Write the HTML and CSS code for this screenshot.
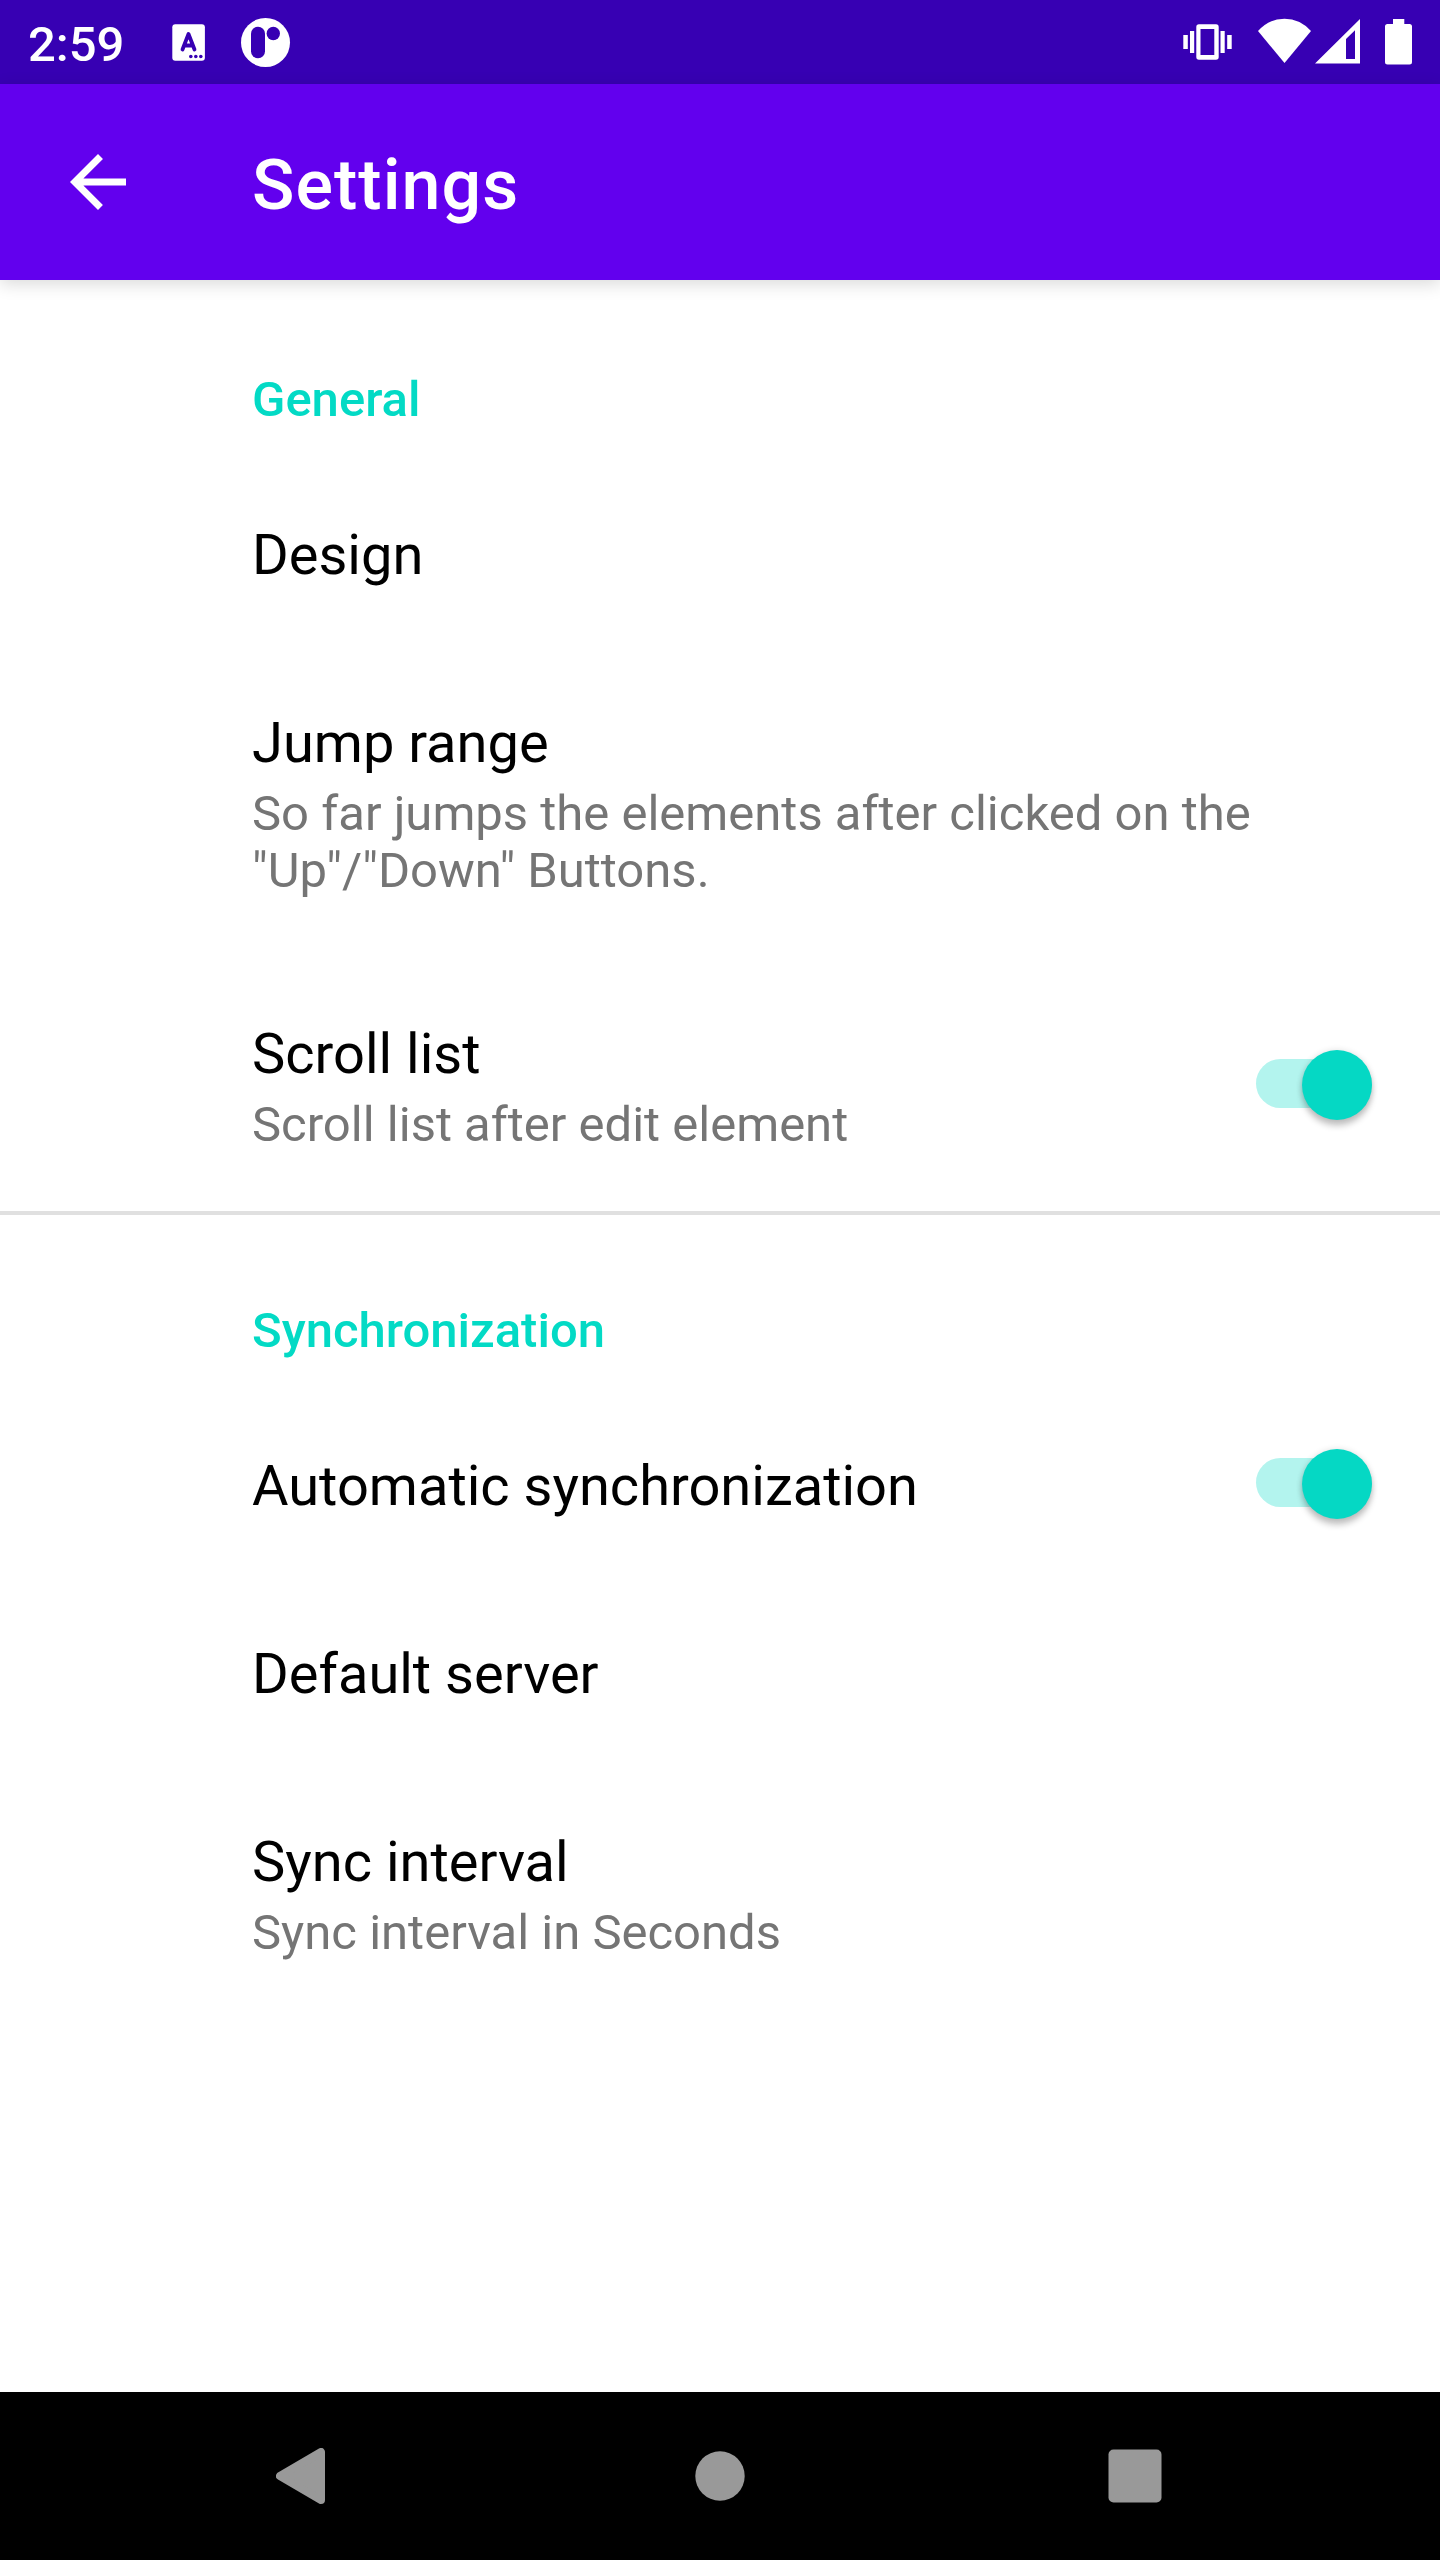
FILE: index.html
```html
<!DOCTYPE html>
<html lang="en">
<head>
<meta charset="utf-8">
<title>Settings</title>
<link rel="stylesheet" href="styles.css">
</head>
<body>
<div class="screen">
  <div class="status-bar">
    <span class="clock">2:59</span>
    <svg class="icon-keyboard" width="34" height="38" viewBox="0 0 34 38"><rect x="0.3" y="0.3" width="32.6" height="36.4" rx="3" fill="#fff"/><path d="M10.500 25.500L16.500 10L22.500 25.500M12.500 21.500H20.500" fill="none" stroke="#3700b3" stroke-width="3.800" stroke-linecap="round" stroke-linejoin="round"/><g fill="#3700b3"><circle cx="18.800" cy="32.500" r="1.800"/><circle cx="23.800" cy="32.500" r="1.800"/><circle cx="28.800" cy="32.500" r="1.800"/></g></svg>
    <svg class="icon-app" width="50" height="50" viewBox="0 0 50 50"><circle cx="24.500" cy="24.500" r="24.500" fill="#fff"/><rect x="10" y="8.700" width="14" height="31.500" rx="7" fill="#3700b3"/><circle cx="32.300" cy="15.500" r="6.700" fill="#3700b3"/></svg>
    <div class="status-right">
      <svg class="icon-vibrate" width="50" height="36" viewBox="0 0 50 36"><g fill="#fff"><rect x="0.300" y="11" width="4.500" height="14"/><rect x="7" y="7" width="4.200" height="22"/><path fill-rule="evenodd" d="M16 0.300H33Q35.700 0.300 35.700 3V33Q35.700 35.700 33 35.700H16Q13.300 35.700 13.300 33V3Q13.300 0.300 16 0.300ZM17.500 5V31H31.300V5Z"/><rect x="37.500" y="7" width="4.200" height="22"/><rect x="44.200" y="11" width="4.500" height="14"/></g></svg>
      <svg class="icon-wifi" width="54" height="46" viewBox="0 0 54 46"><path d="M0 13Q11 0.700 26.500 0.700T53 13L26.500 45Z" fill="#fff"/></svg>
      <svg class="icon-signal" width="45" height="45" viewBox="0 0 45 45"><path fill-rule="evenodd" d="M0 44.500L45 0V44.500ZM31 20V40H40V11.300Z" fill="#fff"/></svg>
      <svg class="icon-battery" width="27" height="46" viewBox="0 0 27 46"><path d="M8 0H19.300V5H24.500Q27 5 27 7.500V43Q27 45.500 24.500 45.500H2.500Q0 45.500 0 43V7.500Q0 5 2.500 5H8Z" fill="#fff"/></svg>
    </div>
  </div>
  <header class="app-bar">
    <svg class="icon-back" width="56" height="56" viewBox="4 4 16 16"><path d="M20 11H7.830l5.590-5.590L12 4l-8 8 8 8 1.410-1.410L7.830 13H20v-2z" fill="#fff"/></svg>
    <h1 class="app-title">Settings</h1>
  </header>
  <main class="settings">
    <section class="group">
      <h2 class="category">General</h2>
      <div class="row"><div class="title">Design</div></div>
      <div class="row"><div class="text"><div class="title">Jump range</div><div class="summary multiline">So far jumps the elements after clicked on the "Up"/"Down" Buttons.</div></div></div>
      <div class="row"><div class="text"><div class="title">Scroll list</div><div class="summary">Scroll list after edit element</div></div><div class="switch"><div class="thumb"></div></div></div>
    </section>
    <section class="group divided">
      <h2 class="category">Synchronization</h2>
      <div class="row"><div class="text"><div class="title">Automatic synchronization</div></div><div class="switch single-line"><div class="thumb"></div></div></div>
      <div class="row"><div class="title">Default server</div></div>
      <div class="row"><div class="text"><div class="title">Sync interval</div><div class="summary">Sync interval in Seconds</div></div></div>
    </section>
  </main>
  <nav class="nav-bar">
    <svg class="nav-back" width="49" height="56" viewBox="0 0 49 56"><path d="M4 28L45 4V52Z" fill="#999" stroke="#999" stroke-width="8" stroke-linejoin="round"/></svg>
    <svg class="nav-home" width="50" height="50" viewBox="0 0 50 50"><circle cx="25" cy="25" r="24.700" fill="#999"/></svg>
    <svg class="nav-recent" width="54" height="54" viewBox="0 0 54 54"><rect x="0.500" y="0.500" width="53" height="53" rx="5" fill="#999"/></svg>
  </nav>
</div>
</body>
</html>
```

FILE: styles.css
```css
* { box-sizing: border-box; }
body { margin: 0; font-family: Roboto, sans-serif; background: #fff; }
h1, h2 { margin: 0; font-weight: 500; }
svg { display: block; flex: none; }
.screen { width: 1440px; height: 2560px; display: flex; flex-direction: column; background: #fff; }

.status-bar { height: 84px; flex: none; background: #3700b3; color: #fff; display: flex; align-items: flex-start; padding-left: 28px; }
.clock { width: 144px; font-size: 49px; font-weight: 500; line-height: 57px; padding-top: 16px; }
.icon-keyboard { margin-top: 24px; }
.icon-app { margin: 18px 0 0 35px; }
.status-right { margin-left: auto; margin-right: 28px; display: flex; align-items: flex-start; }
.icon-vibrate { margin-top: 24px; }
.icon-wifi { margin: 18px 0 0 25px; }
.icon-signal { margin: 19px 0 0 3px; }
.icon-battery { margin: 19px 0 0 25px; }

.app-bar { height: 196px; flex: none; background: #6200ee; color: #fff; display: flex; align-items: flex-start; padding-left: 70px; box-shadow: 0 4px 16px rgba(0, 0, 0, 0.15); }
.icon-back { margin-top: 70px; }
.app-title { margin: 60px 0 0 126px; font-size: 70px; line-height: 82px; letter-spacing: 0.015em; }

.settings { flex: 1; }
.category { height: 181px; padding: 91px 0 0 252px; font-size: 49px; line-height: 57px; color: #03dac5; }
.divided .category { border-top: 4px solid #e0e0e0; padding-top: 87px; }
.row { display: flex; align-items: center; justify-content: space-between; padding: 56px 56px 56px 252px; }
.title { font-size: 56px; line-height: 76px; color: #000; }
.summary { width: 1050px; padding-bottom: 2px; margin-top: 4px; font-size: 49px; line-height: 57px; color: #757575; }
.summary.multiline { padding-bottom: 5px; }
.text { flex: none; width: 960px; }
.switch { width: 116px; height: 49px; margin: 0 12px 4px 0; border-radius: 25px; background: #b3f4ee; display: flex; align-items: center; justify-content: flex-end; }
.switch.single-line { margin-bottom: 7px; }
.thumb { width: 70px; height: 70px; margin-top: 2px; flex: none; border-radius: 50%; background: #05d8c4; box-shadow: 0 6px 6px rgba(0, 0, 0, 0.22), 0 0 6px rgba(0, 0, 0, 0.12); }

.nav-bar { height: 168px; flex: none; background: #000; display: flex; align-items: center; }
.nav-back { margin-left: 276px; }
.nav-home { margin-left: 370px; }
.nav-recent { margin-left: 363px; }
```
